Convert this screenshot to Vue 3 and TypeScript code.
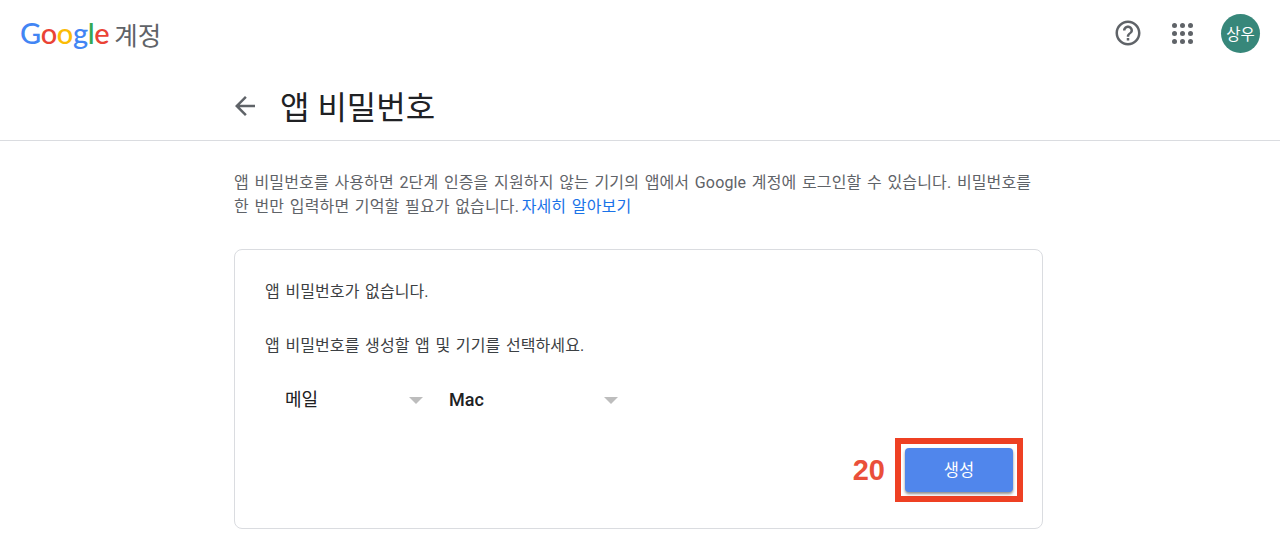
<script setup lang="ts">
const dots = Array.from({ length: 9 }, (_, i) => i);
</script>

<template>
  <div class="page">
    <header class="topbar">
      <div class="brand">
        <span class="logo"><span class="g-blue">G</span><span class="g-red">o</span><span class="g-yellow">o</span><span class="g-blue">g</span><span class="g-green">l</span><span class="g-red">e</span></span>
        <span class="brand-name">계정</span>
      </div>
      <div class="actions">
        <svg class="help" viewBox="0 0 24 24" width="30" height="30">
          <path fill="#5f6368" d="M11 18h2v-2h-2v2zm1-16C6.48 2 2 6.48 2 12s4.48 10 10 10 10-4.48 10-10S17.52 2 12 2zm0 18c-4.41 0-8-3.59-8-8s3.59-8 8-8 8 3.59 8 8-3.59 8-8 8zm0-14c-2.21 0-4 1.79-4 4h2c0-1.1.9-2 2-2s2 .9 2 2c0 2-3 1.75-3 5h2c0-2.25 3-2.5 3-5 0-2.21-1.79-4-4-4z" />
        </svg>
        <div class="apps">
          <span v-for="d in dots" :key="d" class="dot"></span>
        </div>
        <div class="avatar">상우</div>
      </div>
    </header>

    <div class="title-row">
      <svg class="back" viewBox="0 0 24 24" width="30" height="30">
        <path fill="#5f6368" d="M20 11H7.83l5.59-5.59L12 4l-8 8 8 8 1.41-1.41L7.83 13H20v-2z" />
      </svg>
      <h1 class="title">앱 비밀번호</h1>
    </div>

    <main class="content">
      <p class="intro">
        앱 비밀번호를 사용하면 2단계 인증을 지원하지 않는 기기의 앱에서 Google 계정에 로그인할 수 있습니다. 비밀번호를
        한 번만 입력하면 기억할 필요가 없습니다.
        <a class="link">자세히 알아보기</a>
      </p>

      <section class="card">
        <p class="line">앱 비밀번호가 없습니다.</p>
        <p class="line line-second">앱 비밀번호를 생성할 앱 및 기기를 선택하세요.</p>
        <div class="selects">
          <div class="select select-app"><span>메일</span><i class="caret"></i></div>
          <div class="select select-device"><span>Mac</span><i class="caret"></i></div>
        </div>
        <div class="footer">
          <span class="step">20</span>
          <div class="highlight">
            <button class="create" type="button">생성</button>
          </div>
        </div>
      </section>
    </main>
  </div>
</template>

<style scoped>
.page {
  width: 1280px;
  height: 537px;
  overflow: hidden;
  background: #fff;
  font-family: Roboto, "Noto Sans CJK KR", sans-serif;
  color: #3c4043;
}

.topbar {
  height: 66px;
  display: flex;
  align-items: center;
  justify-content: space-between;
  padding: 0 20px;
}

.brand {
  display: flex;
  align-items: center;
  gap: 5px;
}

.logo {
  font-family: Lato, "Liberation Sans", sans-serif;
  font-size: 29px;
  font-weight: 500;
  letter-spacing: -0.35px;
  line-height: 34px;
}

.g-blue { color: #4285f4; }
.g-red { color: #ea4335; }
.g-yellow { color: #fbbc05; }
.g-green { color: #34a853; }

.brand-name {
  font-size: 25.5px;
  color: #5f6368;
}

.actions {
  display: flex;
  align-items: center;
}

.help {
  margin-right: 29px;
}

.apps {
  display: grid;
  grid-template-columns: repeat(3, 5px);
  gap: 3px;
  margin-right: 28px;
}

.dot {
  width: 5px;
  height: 5px;
  border-radius: 50%;
  background: #5f6368;
}

.avatar {
  width: 39px;
  height: 39px;
  border-radius: 50%;
  background: #37877a;
  color: #fff;
  font-size: 15.5px;
  display: flex;
  align-items: center;
  justify-content: center;
}

.title-row {
  height: 75px;
  box-sizing: border-box;
  border-bottom: 1px solid #dadce0;
  padding: 3px 0 0 230px;
  display: flex;
  align-items: center;
  gap: 20px;
}

.back {
  margin-top: 2px;
}

.title {
  margin: 0;
  font-size: 32px;
  font-weight: 400;
  color: #202124;
}

.content {
  width: 809px;
  margin-left: 234px;
  padding-top: 30px;
}

.intro {
  margin: 0;
  font-size: 16px;
  line-height: 24px;
  letter-spacing: 0.14px;
  word-spacing: 1.5px;
  color: #5f6368;
}

.link {
  color: #1a73e8;
  margin-left: -3px;
}

.card {
  box-sizing: border-box;
  height: 280px;
  margin-top: 30px;
  padding: 31px 30px 0;
  border: 1px solid #dadce0;
  border-radius: 8px;
}

.line {
  margin: 0;
  font-size: 16px;
  line-height: 22px;
  letter-spacing: 0.1px;
  word-spacing: 1.5px;
  color: #3c4043;
}

.line-second {
  margin-top: 32px;
}

.selects {
  display: flex;
  margin-top: 31px;
  font-size: 18px;
  color: #202124;
}

.select {
  position: relative;
  box-sizing: border-box;
  height: 24px;
  line-height: 24px;
  padding-left: 20px;
}

.select-app {
  width: 164px;
}

.select-app .caret {
  right: 6px;
}

.select-device {
  width: 189px;
  font-weight: 500;
}

.caret {
  position: absolute;
  right: 0;
  top: 9px;
  border-left: 7px solid transparent;
  border-right: 7px solid transparent;
  border-top: 7px solid #bdbdbd;
}

.footer {
  display: flex;
  justify-content: flex-end;
  align-items: center;
  gap: 10px;
  margin-top: 26px;
  margin-right: -11px;
}

.step {
  font-family: "Liberation Sans", Arial, sans-serif;
  font-size: 29px;
  font-weight: 700;
  color: #ea4f3a;
}

.highlight {
  border: 6px solid #ee4023;
  padding: 4px;
}

.create {
  display: block;
  width: 108px;
  height: 44px;
  padding: 0 0 3px;
  border: 0;
  border-radius: 4px;
  background: #5086ec;
  color: #fff;
  font-family: inherit;
  font-size: 16.5px;
  box-shadow: 0 2px 3px rgba(0, 0, 0, 0.45);
}
</style>

<style>
html, body {
  margin: 0;
  background: #fff;
}
</style>
